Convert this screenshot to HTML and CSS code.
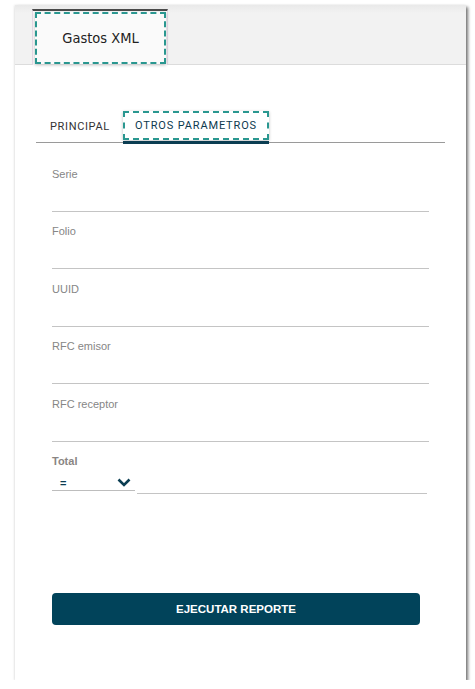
FILE: index.html
```html
<!DOCTYPE html>
<html lang="es">
<head>
<meta charset="utf-8">
<link rel="stylesheet" href="styles.css">
</head>
<body>
<div class="card">
  <div class="header">
    <div class="head-tab"><span class="focus">Gastos XML</span></div>
  </div>
  <div class="tabs">
    <div class="tab">PRINCIPAL</div>
    <div class="tab active"><span class="focus">OTROS PARAMETROS</span></div>
  </div>
  <div class="fields">
    <div class="field"><label>Serie</label><div class="input"></div></div>
    <div class="field"><label>Folio</label><div class="input"></div></div>
    <div class="field"><label>UUID</label><div class="input"></div></div>
    <div class="field"><label>RFC emisor</label><div class="input"></div></div>
    <div class="field"><label>RFC receptor</label><div class="input"></div></div>
    <div class="field total">
      <label>Total</label>
      <div class="total-row">
        <div class="select">
          <span class="eq">=</span>
          <svg class="chev" width="14" height="9" viewBox="0 0 14 9"><path d="M1.5 1.5 L7 7 L12.5 1.5" fill="none" stroke="#0b3d52" stroke-width="2.6"/></svg>
        </div>
        <div class="num"></div>
      </div>
    </div>
  </div>
  <div class="actions">
    <button class="btn">EJECUTAR REPORTE</button>
  </div>
</div>
</body>
</html>
```
FILE: styles.css
```css
html, body {
  margin: 0;
  padding: 0;
  background: #ffffff;
}
body {
  font-family: "Liberation Sans", Arial, sans-serif;
}
.card {
  margin: 5px 0 0 15px;
  width: 451px;
  height: 675px;
  background: #ffffff;
  box-shadow: 2px 2px 3px rgba(0,0,0,0.55), -1px 0 2px rgba(0,0,0,0.08);
  box-sizing: border-box;
}
.header {
  height: 60px;
  background: linear-gradient(#e9e9e9, #f2f2f2 8px);
  border-bottom: 1px solid #dcdcdc;
  box-sizing: border-box;
  padding-left: 17px;
  padding-top: 4px;
  display: flex;
}
.head-tab {
  width: 136px;
  height: 56px;
  background: #fafafa;
  border-top: 2px solid #4a4a4a;
  border-left: 1px solid #e6d8e6;
  border-right: 1px solid #e6d8e6;
  box-sizing: border-box;
  padding: 1px 1px 1px 2px;
  display: flex;
}
.head-tab .focus {
  flex: 1;
  border: 2px dashed #2a9790;
  box-shadow: 0 1px 3px rgba(0,0,0,0.25);
  display: flex;
  align-items: center;
  justify-content: center;
  font-family: "DejaVu Sans Condensed", "DejaVu Sans", sans-serif;
  font-size: 14.5px;
  color: #222;
}
.tabs {
  margin: 45px 21px 0 21px;
  border-bottom: 1px solid #9a9a9a;
  display: flex;
  height: 33px;
  box-sizing: border-box;
}
.tab {
  font-family: Roboto, "Liberation Sans", sans-serif;
  font-size: 11px;
  letter-spacing: 0.65px;
  color: #333;
  display: flex;
  align-items: center;
}
.tab:first-child {
  padding-left: 14px;
  width: 85px;
  box-sizing: border-box;
}
.tab.active {
  width: 154px;
  height: 33px;
  padding: 0 6px 0 2px;
  box-sizing: border-box;
  position: relative;
}
.tab.active::after {
  content: "";
  position: absolute;
  left: 2px;
  right: 6px;
  bottom: -1px;
  height: 3px;
  background: #0b3d52;
}
.tab.active .focus {
  flex: 1;
  height: 29px;
  border: 2px dashed #2a9790;
  box-shadow: 0 1px 3px rgba(0,0,0,0.25);
  display: flex;
  align-items: center;
  justify-content: center;
  color: #0d3a4f;
  letter-spacing: 0.85px;
  box-sizing: border-box;
  margin-top: -3px;
}
.fields {
  margin: 0 37px;
  padding-top: 11px;
}
.field {
  padding-top: 13.5px;
}
.field label {
  display: block;
  font-size: 11px;
  line-height: 13px;
  color: #868686;
}
.field .input {
  height: 30px;
  border-bottom: 1px solid #c4c4c4;
}
.total label {
  font-weight: bold;
  color: #8a8583;
}
.total-row {
  display: flex;
  margin-top: 1px;
}
.select {
  width: 83px;
  height: 22px;
  border-bottom: 1px solid #bdbdbd;
  display: flex;
  align-items: center;
  justify-content: space-between;
  box-sizing: border-box;
  padding: 6px 4px 0 8px;
}
.eq {
  font-size: 11px;
  color: #0b3d52;
  font-weight: bold;
}
.chev {
  display: block;
}
.num {
  width: 290px;
  margin-left: 2px;
  height: 24px;
  border-bottom: 1px solid #c4c4c4;
}
.actions {
  margin: 99px 46px 0 37px;
}
.btn {
  display: block;
  width: 368px;
  height: 32px;
  border: none;
  border-radius: 4px;
  background: #01435a;
  color: #ffffff;
  font-family: "Liberation Sans", Arial, sans-serif;
  font-size: 11.5px;
  font-weight: bold;
  padding: 0;
}
```
